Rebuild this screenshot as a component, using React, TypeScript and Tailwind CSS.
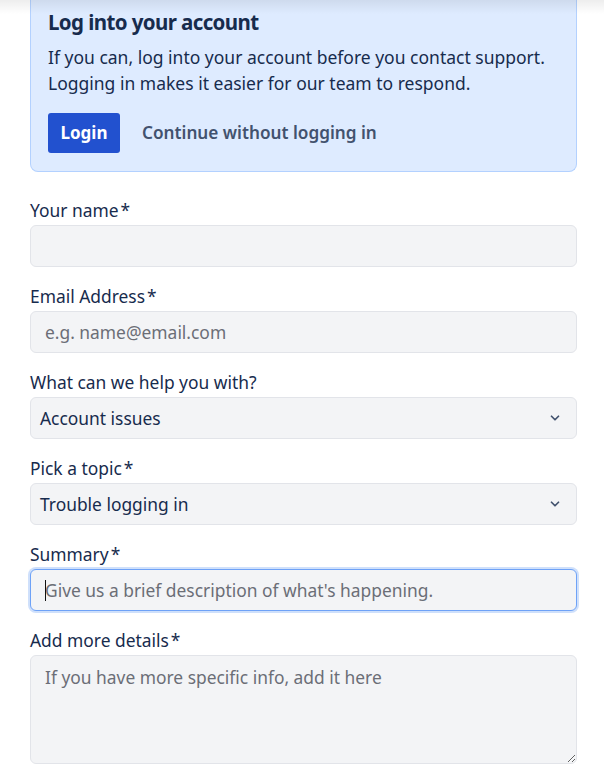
import { ChevronDown } from "lucide-react";

const font = { fontFamily: '"Noto Sans", "Liberation Sans", sans-serif' };

function Label({ text, required }: { text: string; required?: boolean }) {
  return (
    <label className="mb-[3px] block text-[17.4px] leading-6 text-[#172b4d]">
      {text}
      {required && <span className="ml-0.5">*</span>}
    </label>
  );
}

function Select({ value }: { value: string }) {
  return (
    <div className="flex h-[42px] items-center justify-between rounded-md border border-[#e2e4e9] bg-[#f3f4f6] pl-[9px] pr-[14px] text-[17.4px] text-[#172b4d]">
      <span>{value}</span>
      <ChevronDown size={14} strokeWidth={3} className="text-[#42526e]" />
    </div>
  );
}

export default function App() {
  return (
    <div className="relative min-h-[778px] bg-white pl-[30px] pr-[27px]" style={font}>
      <div className="pointer-events-none absolute inset-x-0 top-0 h-5 bg-gradient-to-b from-black/10 to-transparent" />
      <section className="-mt-[6px] rounded-b-lg border border-t-0 border-[#b3d1ff] bg-[#deebff] px-[17px] pt-4 pb-[18px]">
        <h2 className="text-[20.5px] font-bold leading-6 tracking-[-0.6px] text-[#172b4d]">Log into your account</h2>
        <p className="mt-[10px] text-[17.5px] leading-[26px] text-[#172b4d]">
          If you can, log into your account before you contact support.
          <br />
          Logging in makes it easier for our team to respond.
        </p>
        <div className="mt-[17px] flex items-center gap-[22px]">
          <button className="h-10 w-[72px] rounded-[3px] bg-[#2251cf] text-[17px] font-bold text-white">Login</button>
          <button className="text-[17.2px] font-semibold text-[#42526e]">Continue without logging in</button>
        </div>
      </section>

      <form className="mt-[26px] flex flex-col gap-[17px]">
        <div>
          <Label text="Your name" required />
          <input className="h-[42px] w-full rounded-md border border-[#e2e4e9] bg-[#f3f4f6] px-[14px] text-[17.4px] outline-none" />
        </div>
        <div>
          <Label text="Email Address" required />
          <input
            placeholder="e.g. name@email.com"
            className="h-[42px] w-full rounded-md border border-[#e2e4e9] bg-[#f3f4f6] px-[14px] text-[17.4px] outline-none placeholder:text-[#6b6e76]"
          />
        </div>
        <div>
          <Label text="What can we help you with?" />
          <Select value="Account issues" />
        </div>
        <div>
          <Label text="Pick a topic" required />
          <Select value="Trouble logging in" />
        </div>
        <div>
          <Label text="Summary" required />
          <div className="relative">
            <input
              placeholder="Give us a brief description of what's happening."
              className="h-[42px] w-full rounded-md border border-[#6ea2f7] bg-[#f3f4f6] px-[14px] text-[17.4px] outline-none ring-2 ring-[#cfe0fb] placeholder:text-[#6b6e76]"
            />
            <span className="pointer-events-none absolute left-[15px] top-[11px] h-[21px] w-px bg-[#111]" />
          </div>
        </div>
        <div>
          <Label text="Add more details" required />
          <textarea
            placeholder="If you have more specific info, add it here"
            className="block h-[109px] w-full rounded-md border border-[#e2e4e9] bg-[#f3f4f6] px-[14px] py-[8px] text-[17.4px] outline-none placeholder:text-[#6b6e76]"
          />
        </div>
      </form>
    </div>
  );
}
